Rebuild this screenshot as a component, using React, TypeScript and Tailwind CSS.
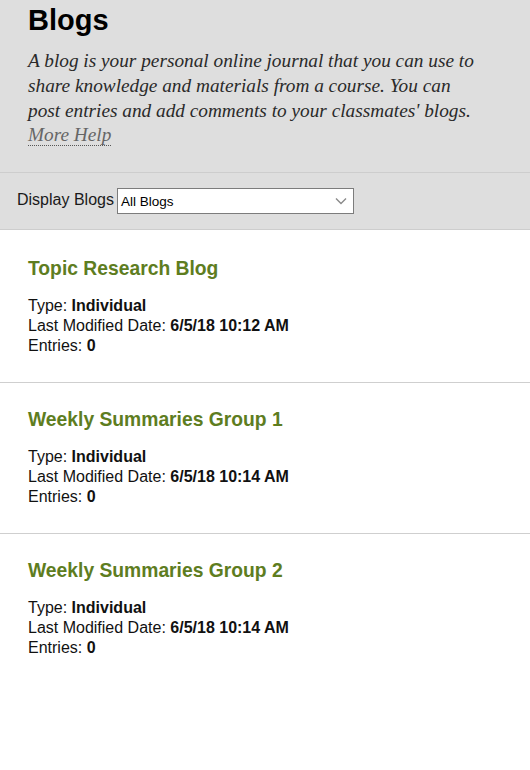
const BLOGS = [
  { title: "Topic Research Blog", type: "Individual", modified: "6/5/18 10:12 AM", entries: 0 },
  { title: "Weekly Summaries Group 1", type: "Individual", modified: "6/5/18 10:14 AM", entries: 0 },
  { title: "Weekly Summaries Group 2", type: "Individual", modified: "6/5/18 10:14 AM", entries: 0 },
];

function BlogItem({ blog, last }: { blog: (typeof BLOGS)[number]; last: boolean }) {
  return (
    <div className={`px-7 pt-[26px] first:pt-[28px] pb-[26px] ${last ? "" : "border-b border-[#cfcfcf]"}`}>
      <h2 className="text-[19.3px] leading-[22px] font-bold text-[#5e7d1f]">{blog.title}</h2>
      <div className="mt-4 text-[16px] leading-5 text-[#111]">
        <div>
          Type: <span className="font-bold">{blog.type}</span>
        </div>
        <div>
          Last Modified Date: <span className="font-bold">{blog.modified}</span>
        </div>
        <div>
          Entries: <span className="font-bold">{blog.entries}</span>
        </div>
      </div>
    </div>
  );
}

export default function App() {
  return (
    <div className="w-[530px] min-h-[770px] bg-white font-['Liberation_Sans',Arial,sans-serif]">
      <div className="bg-[#dedede] border-b border-[#cdcdcd] px-7 pt-1 pb-[24px]">
        <h1 className="text-[29px] leading-[33px] font-bold text-black">Blogs</h1>
        <p className="mt-[12px] font-['Liberation_Serif',Georgia,serif] italic text-[19.3px] leading-[24.8px] text-[#2a2a2a]">
          A blog is your personal online journal that you can use to
          <br />
          share knowledge and materials from a course. You can
          <br />
          post entries and add comments to your classmates' blogs.
          <br />
          <a className="text-[#666] border-b border-dotted border-[#555]">More Help</a>
        </p>
      </div>
      <div className="bg-[#dedede] border-b border-[#cdcdcd] h-[57px] flex items-center pl-[17px] gap-[3px]">
        <span className="text-[16px] text-[#1a1a1a] -mt-[2px]">Display Blogs</span>
        <div className="relative mb-[1px] w-[237px] h-[26px] bg-white border border-[#7c7c7c] flex items-center pl-[3px] pt-[2px]">
          <span className="text-[13.5px] text-black">All Blogs</span>
          <svg className="absolute right-[6px] top-[8px]" width="12" height="8" viewBox="0 0 12 8" fill="none">
            <path d="M1 1.5l5 5 5-5" stroke="#8a8a8a" strokeWidth="1.4" />
          </svg>
        </div>
      </div>
      <div>
        {BLOGS.map((b, i) => (
          <BlogItem key={b.title} blog={b} last={i === BLOGS.length - 1} />
        ))}
      </div>
    </div>
  );
}
